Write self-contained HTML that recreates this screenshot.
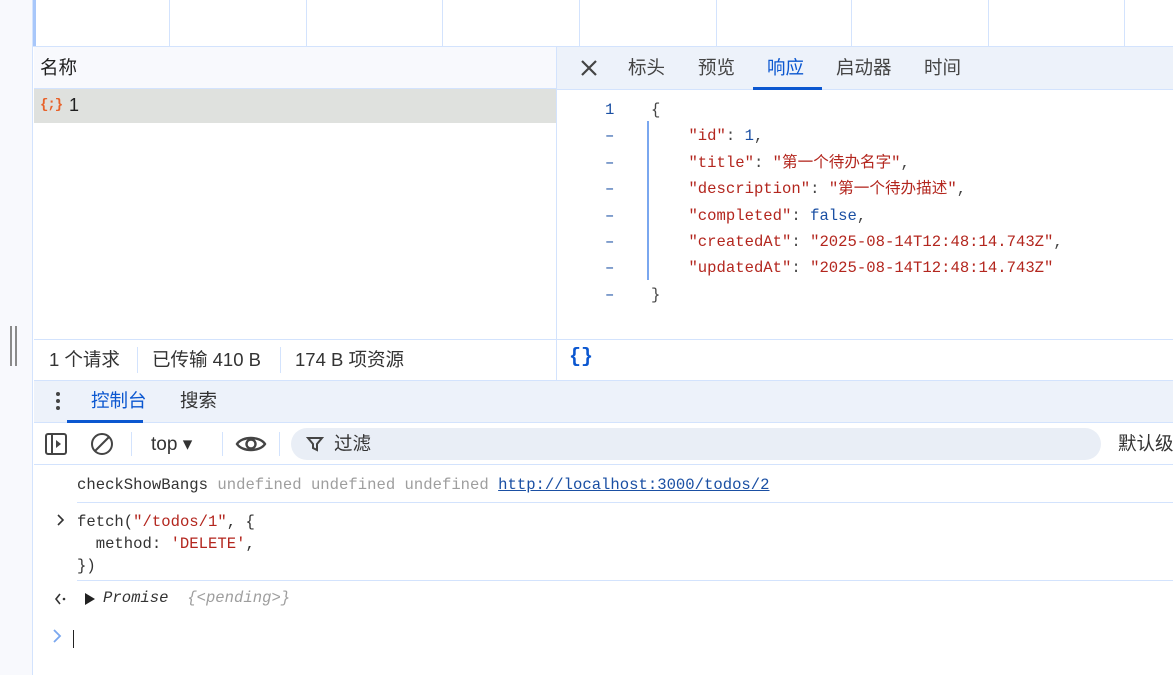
<!DOCTYPE html>
<html><head><meta charset="utf-8"><style>
*{margin:0;padding:0;box-sizing:border-box}
body{width:1173px;height:675px;overflow:hidden;background:#fff;font-family:"Liberation Sans","Noto Sans CJK SC",sans-serif;color:#1f1f1f;position:relative}
.a{position:absolute;white-space:nowrap}
.m{font-family:"Liberation Mono","Noto Sans CJK SC",monospace;font-size:15.6px;white-space:pre}
.cjk{font-size:18.5px;line-height:22px}
.r{color:#b3261e}.b{color:#1a4fa3}.g{color:#9e9e9e}
</style></head><body>
<div class="a" style="left:0;top:0;width:33px;height:675px;background:#f8f9fd;border-right:1px solid #d3e3fd"></div>
<div class="a" style="left:10px;top:326px;width:2px;height:40px;background:#8a8a8a"></div>
<div class="a" style="left:15px;top:326px;width:2px;height:40px;background:#8a8a8a"></div>
<div class="a" style="left:33px;top:0;width:3px;height:46px;background:#a8c7fa"></div>
<div class="a" style="left:33px;top:46px;width:1140px;height:1px;background:#d3e3fd"></div>
<div class="a" style="left:169px;top:0;width:1px;height:46px;background:#d3e3fd"></div>
<div class="a" style="left:306px;top:0;width:1px;height:46px;background:#d3e3fd"></div>
<div class="a" style="left:442px;top:0;width:1px;height:46px;background:#d3e3fd"></div>
<div class="a" style="left:579px;top:0;width:1px;height:46px;background:#d3e3fd"></div>
<div class="a" style="left:716px;top:0;width:1px;height:46px;background:#d3e3fd"></div>
<div class="a" style="left:851px;top:0;width:1px;height:46px;background:#d3e3fd"></div>
<div class="a" style="left:988px;top:0;width:1px;height:46px;background:#d3e3fd"></div>
<div class="a" style="left:1124px;top:0;width:1px;height:46px;background:#d3e3fd"></div>
<div class="a" style="left:34px;top:47px;width:522px;height:42px;background:#f8f9fd;border-bottom:1px solid #d3e3fd"></div>
<div class="a cjk" style="left:40px;top:57px">名称</div>
<div class="a" style="left:34px;top:89px;width:522px;height:34px;background:#dfe1de"></div>
<div class="a" style="left:40px;top:97px;color:#e8622a;font-size:14px;font-weight:bold;font-family:'Liberation Mono',monospace;letter-spacing:-1px">{;}</div>
<div class="a" style="left:69px;top:95px;font-size:18px">1</div>
<div class="a" style="left:556px;top:47px;width:1px;height:333px;background:#d3e3fd"></div>
<div class="a" style="left:557px;top:47px;width:616px;height:43px;background:#edf2fa;border-bottom:1px solid #d3e3fd"></div>
<svg class="a" style="left:580px;top:59px" width="18" height="18"><path d="M2 2L16 16M16 2L2 16" stroke="#444" stroke-width="2.2"/></svg>
<div class="a cjk" style="left:628px;top:57px;color:#444">标头</div>
<div class="a cjk" style="left:698px;top:57px;color:#444">预览</div>
<div class="a cjk" style="left:767px;top:57px;color:#0b57d0">响应</div>
<div class="a" style="left:753px;top:87px;width:69px;height:3px;background:#0b57d0"></div>
<div class="a cjk" style="left:836px;top:57px;color:#444">启动器</div>
<div class="a cjk" style="left:924px;top:57px;color:#444">时间</div>
<div class="a" style="left:647px;top:121px;width:2px;height:159px;background:#7aa7ef"></div>
<div class="a m" style="left:605px;top:97px;line-height:26.4px;color:#1a4fa3">1
–
–
–
–
–
–
–</div>
<div class="a m" style="left:651px;top:97px;line-height:26.4px;color:#444">{
    <span class="r">"id"</span>: <span class="b">1</span>,
    <span class="r">"title"</span>: <span class="r">"第一个待办名字"</span>,
    <span class="r">"description"</span>: <span class="r">"第一个待办描述"</span>,
    <span class="r">"completed"</span>: <span class="b">false</span>,
    <span class="r">"createdAt"</span>: <span class="r">"2025-08-14T12:48:14.743Z"</span>,
    <span class="r">"updatedAt"</span>: <span class="r">"2025-08-14T12:48:14.743Z"</span>
}</div>
<div class="a" style="left:34px;top:339px;width:1139px;height:1px;background:#d3e3fd"></div>
<div class="a cjk" style="left:49px;top:349px;color:#333">1 个请求</div>
<div class="a" style="left:137px;top:347px;width:1px;height:26px;background:#d3e3fd"></div>
<div class="a cjk" style="left:152px;top:349px;color:#333">已传输 410 B</div>
<div class="a" style="left:280px;top:347px;width:1px;height:26px;background:#d3e3fd"></div>
<div class="a cjk" style="left:295px;top:349px;color:#333">174 B 项资源</div>
<div class="a" style="left:569px;top:346px;font-size:20px;font-weight:bold;color:#0b57d0;font-family:'Liberation Mono',monospace">{}</div>
<div class="a" style="left:34px;top:380px;width:1139px;height:43px;background:#edf2fa;border-top:1px solid #d3e3fd;border-bottom:1px solid #d3e3fd"></div>
<div class="a" style="left:56px;top:392px;width:4px;height:4px;border-radius:2px;background:#444;box-shadow:0 7px 0 #444,0 14px 0 #444"></div>
<div class="a cjk" style="left:91px;top:390px;color:#0b57d0">控制台</div>
<div class="a" style="left:67px;top:420px;width:76px;height:3px;background:#0b57d0"></div>
<div class="a cjk" style="left:180px;top:390px;color:#333">搜索</div>
<div class="a" style="left:34px;top:464px;width:1139px;height:1px;background:#d3e3fd"></div>
<svg class="a" style="left:44px;top:432px" width="26" height="26" viewBox="0 0 26 26"><rect x="2" y="2" width="20" height="20" rx="2" fill="none" stroke="#444" stroke-width="2"/><line x1="8" y1="2" x2="8" y2="22" stroke="#444" stroke-width="2"/><path d="M12 8l5 4-5 4z" fill="#444"/></svg>
<svg class="a" style="left:90px;top:432px" width="26" height="26"><circle cx="12" cy="12" r="10" fill="none" stroke="#444" stroke-width="2"/><line x1="5" y1="19" x2="19" y2="5" stroke="#444" stroke-width="2"/></svg>
<div class="a" style="left:131px;top:432px;width:1px;height:24px;background:#d3e3fd"></div>
<div class="a" style="left:151px;top:433px;font-size:19px;color:#333">top ▾</div>
<div class="a" style="left:222px;top:432px;width:1px;height:24px;background:#d3e3fd"></div>
<svg class="a" style="left:235px;top:433px" width="32" height="22"><path d="M2 11C7 3 25 3 30 11C25 19 7 19 2 11Z" fill="none" stroke="#444" stroke-width="2.4"/><circle cx="16" cy="11" r="4.5" fill="none" stroke="#444" stroke-width="2.4"/></svg>
<div class="a" style="left:279px;top:432px;width:1px;height:24px;background:#d3e3fd"></div>
<div class="a" style="left:291px;top:428px;width:810px;height:32px;border-radius:16px;background:#e9eef6"></div>
<svg class="a" style="left:306px;top:435px" width="18" height="18"><path d="M2 3h14l-5 6v6l-4-2V9z" fill="none" stroke="#444" stroke-width="2"/></svg>
<div class="a cjk" style="left:334px;top:433px;color:#333">过滤</div>
<div class="a cjk" style="left:1118px;top:433px;color:#333">默认级别</div>
<div class="a m" style="left:77px;top:476px;color:#333">checkShowBangs <span class="g">undefined undefined undefined</span> <span style="color:#1a4fa3;text-decoration:underline">http://localhost:3000/todos/2</span></div>
<div class="a" style="left:77px;top:502px;width:1096px;height:1px;background:#d3e3fd"></div>
<svg class="a" style="left:56px;top:514px" width="10" height="12"><path d="M2 1l5 5-5 5" fill="none" stroke="#333" stroke-width="1.6"/></svg>
<div class="a m" style="left:77px;top:511px;line-height:22px;color:#333">fetch(<span class="r">"/todos/1"</span>, {
  method: <span class="r">'DELETE'</span>,
})</div>
<div class="a" style="left:77px;top:580px;width:1096px;height:1px;background:#d3e3fd"></div>
<svg class="a" style="left:54px;top:593px" width="14" height="12"><path d="M6 1L2 6l4 5" fill="none" stroke="#333" stroke-width="1.6"/><circle cx="10" cy="6" r="1.3" fill="#333"/></svg>
<svg class="a" style="left:84px;top:592px" width="12" height="14"><path d="M1 1l10 6-10 6z" fill="#222"/></svg>
<div class="a m" style="left:103px;top:589px;font-style:italic;color:#333">Promise  <span class="g">{&lt;pending&gt;}</span></div>
<svg class="a" style="left:52px;top:629px" width="10" height="14"><path d="M2 1l6 6-6 6" fill="none" stroke="#7aa7ef" stroke-width="1.8"/></svg>
<div class="a" style="left:73px;top:630px;width:1px;height:18px;background:#222"></div>
</body></html>
